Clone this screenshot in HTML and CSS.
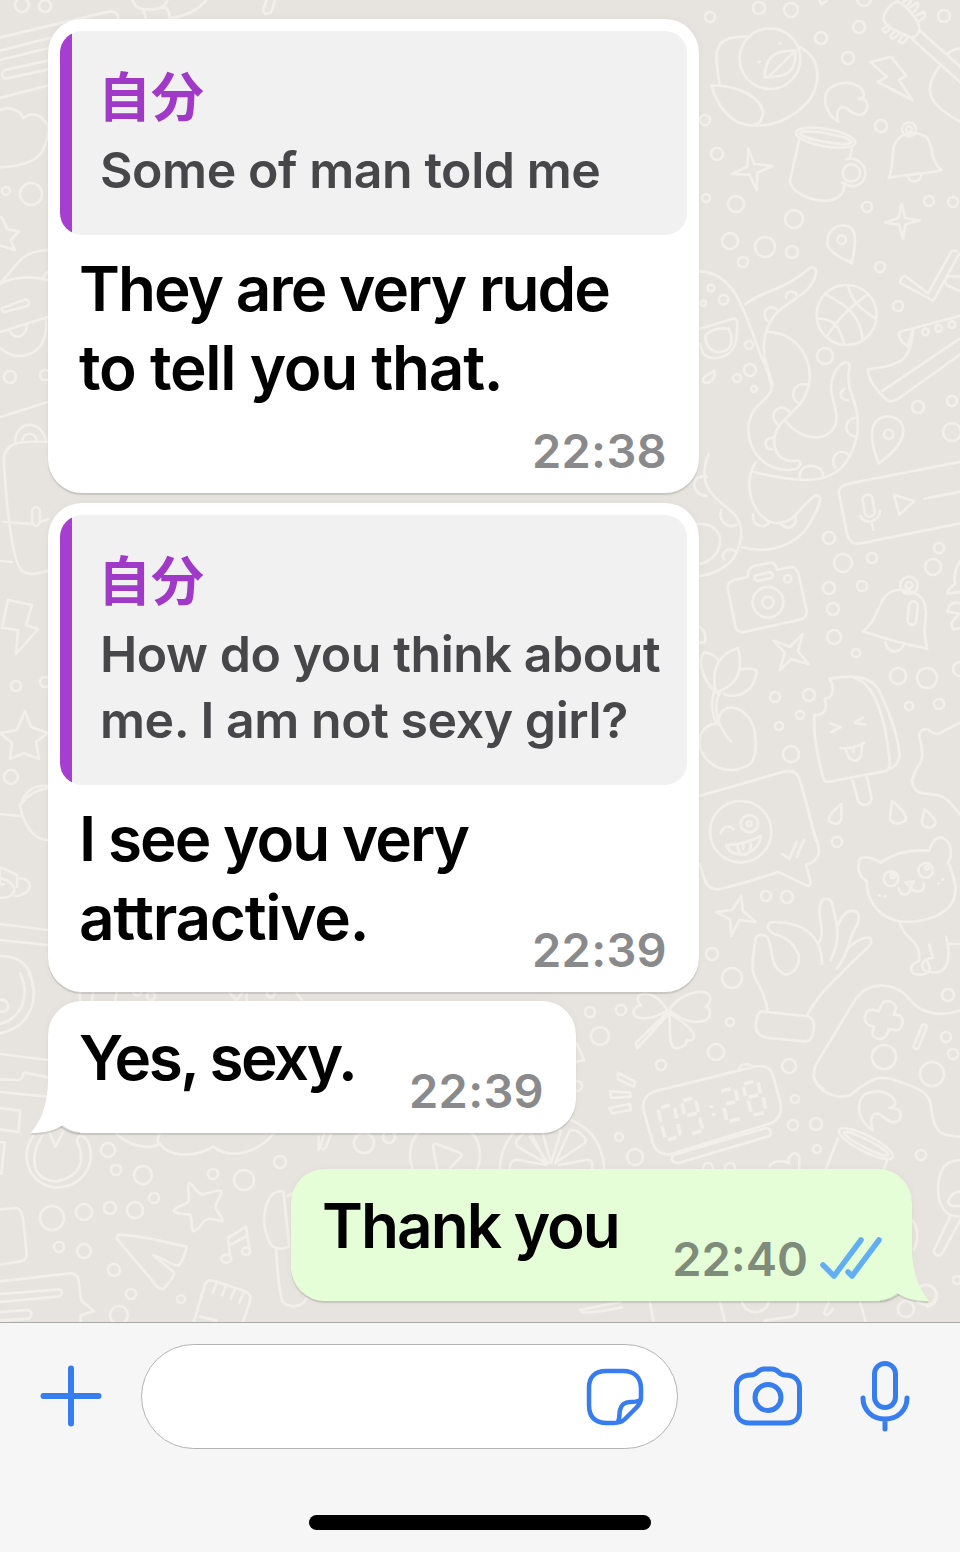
FILE: index.html
```html
<!DOCTYPE html>
<html lang="ja">
<head>
  <meta charset="UTF-8">
  <title>Chat</title>
  <link rel="stylesheet" href="styles.css">
</head>
<body>

  <div class="screen">
    <svg class="wallpaper" viewBox="0 0 960 1322" aria-hidden="true">
      <!-- small dots -->
      <g class="dots">
        <circle cx="710" cy="17" r="5"/><circle cx="759" cy="8" r="6"/><circle cx="791" cy="10" r="7"/><circle cx="821" cy="38" r="6"/><circle cx="859" cy="27" r="6"/><circle cx="864" cy="-1" r="7"/><circle cx="944" cy="16" r="6"/><circle cx="848" cy="58" r="6"/>
        <circle cx="705" cy="120" r="5"/><circle cx="717" cy="154" r="6"/><circle cx="706" cy="198" r="4"/><circle cx="736" cy="204" r="8"/><circle cx="881" cy="126" r="6"/><circle cx="867" cy="207" r="5"/><circle cx="929" cy="201" r="5"/><circle cx="953" cy="202" r="5"/>
        <circle cx="730" cy="241" r="8"/><circle cx="794" cy="219" r="9"/><circle cx="765" cy="247" r="10"/><circle cx="792" cy="252" r="6"/><circle cx="743" cy="262" r="5"/><circle cx="880" cy="267" r="5"/><circle cx="898" cy="306" r="5"/><circle cx="825" cy="356" r="8"/>
        <circle cx="749" cy="345" r="4"/><circle cx="750" cy="370" r="6"/><circle cx="737" cy="378" r="4"/><circle cx="754" cy="389" r="3"/><circle cx="918" cy="407" r="6"/><circle cx="952" cy="401" r="5"/><circle cx="952" cy="432" r="9"/><circle cx="829" cy="538" r="6"/>
        <circle cx="843" cy="563" r="9"/><circle cx="872" cy="558" r="5"/><circle cx="939" cy="548" r="5"/><circle cx="933" cy="567" r="8"/><circle cx="829" cy="588" r="6"/><circle cx="862" cy="586" r="5"/><circle cx="833" cy="609" r="6"/><circle cx="834" cy="637" r="7"/>
        <circle cx="856" cy="653" r="4"/><circle cx="898" cy="676" r="8"/><circle cx="927" cy="678" r="10"/><circle cx="909" cy="706" r="4"/><circle cx="939" cy="704" r="5"/><circle cx="960" cy="669" r="7"/><circle cx="775" cy="697" r="5"/><circle cx="809" cy="695" r="6"/>
        <circle cx="800" cy="715" r="4"/><circle cx="779" cy="726" r="4"/><circle cx="791" cy="754" r="8"/><circle cx="837" cy="842" r="5"/><circle cx="766" cy="896" r="5"/><circle cx="787" cy="897" r="6"/><circle cx="712" cy="954" r="6"/><circle cx="732" cy="978" r="10"/>
        <circle cx="730" cy="1022" r="4"/><circle cx="716" cy="1052" r="8"/><circle cx="789" cy="1066" r="7"/><circle cx="948" cy="995" r="6"/><circle cx="946" cy="1037" r="5"/><circle cx="953" cy="1054" r="5"/><circle cx="884" cy="1057" r="12"/><circle cx="932" cy="1074" r="12"/>
        <circle cx="590" cy="1012" r="5"/><circle cx="621" cy="1010" r="5"/><circle cx="600" cy="1036" r="9"/><circle cx="661" cy="1065" r="5"/><circle cx="619" cy="1137" r="4"/><circle cx="635" cy="1157" r="8"/><circle cx="577" cy="1086" r="5"/><circle cx="795" cy="1099" r="4"/>
        <circle cx="793" cy="1125" r="5"/><circle cx="816" cy="1124" r="6"/><circle cx="817" cy="1149" r="4"/><circle cx="921" cy="1155" r="5"/><circle cx="708" cy="1168" r="5"/><circle cx="730" cy="1168" r="5"/><circle cx="906" cy="1309" r="8"/><circle cx="926" cy="1295" r="10"/><circle cx="957" cy="1280" r="4"/>
        <circle cx="108" cy="1150" r="7"/><circle cx="116" cy="1170" r="5"/><circle cx="143" cy="1175" r="9"/><circle cx="154" cy="1198" r="5"/><circle cx="213" cy="1174" r="5"/><circle cx="244" cy="1180" r="10"/><circle cx="280" cy="1162" r="6"/><circle cx="52" cy="1218" r="12"/>
        <circle cx="84" cy="1212" r="8"/><circle cx="110" cy="1208" r="6"/><circle cx="135" cy="1210" r="8"/><circle cx="59" cy="1247" r="5"/><circle cx="84" cy="1251" r="7"/><circle cx="114" cy="1270" r="6"/><circle cx="131" cy="1294" r="5"/><circle cx="181" cy="1299" r="4"/><circle cx="119" cy="1315" r="9"/>
        <circle cx="22" cy="5" r="7"/><circle cx="45" cy="6" r="6"/><circle cx="6" cy="191" r="4"/><circle cx="31" cy="194" r="11"/><circle cx="10" cy="377" r="6"/><circle cx="45" cy="375" r="5"/><circle cx="16" cy="686" r="5"/><circle cx="45" cy="682" r="5"/><circle cx="11" cy="777" r="7"/>
        <circle cx="364" cy="1143" r="10"/><circle cx="389" cy="1137" r="6"/>
      </g>

      <!-- right side, top: orange, mug, bell, guitar -->
      <g class="doodle" transform="translate(690 0) scale(.33333)">
        <circle cx="240" cy="176" r="91"/>
        <path d="M178 110C110 108 82 122 80 165c-2 30 4 55 8 85M325 140c48 20 60 60 56 100-8 80-110 145-200 136C110 370 78 300 64 256c90 0 150 40 155 82-2 25-14 34-26 36"/>
        <path d="M316 152c-70-2-90 24-92 80 66 0 96-14 92-80L240 226M268 131h4M206 186h4"/>
        <path d="M445 366c-30-20-50-60-34-90 26-40 100-34 110 4 2 12-6 16-14 16 18-4 30 14 22 34-12 26-40 12-60-6-20-10-34 10-24 42z"/>
        <path d="M541 186l62-16 46 58-22 12 40 60-104-54 28-16z"/>
        <path d="M328 418L300 542c0 50 140 90 160 30l4-24M480 470l6-24M468 478c30-10 60 14 58 46-6 34-40 44-70 24"/>
        <circle cx="484" cy="519" r="26"/>
        <ellipse cx="407" cy="413" rx="90" ry="26" transform="rotate(10 407 413)"/>
        <ellipse cx="407" cy="413" rx="78" ry="13" transform="rotate(10 407 413)"/>
        <path d="M175 446l18 46 55 6-46 20-2 52-22-46-52-2 46-22zM635 612l10 42 44 8-42 10-8 44-12-42-42-6 40-14z"/>
        <path d="M596 534c24-50-4-100 40-126 20-14 54-10 74 4 26 36 4 60 44 98-50 14-100 10-158 24zM654 530c6 22 38 18 40-6"/>
        <circle cx="657" cy="388" r="21"/><circle cx="657" cy="388" r="9"/>
        <path d="M414 740c-10-50 30-70 58-62 30 8 26 50 14 112-30-14-64-34-72-50z"/><circle cx="455" cy="719" r="13"/>
        <path d="M622 4c-26 10-54 50-34 68 20 20 56 32 78 42 14-6 24-16 22-30-6-30-36-66-66-80zM666 116l150 136M690 92l130 116M748 200c-60 80-20 120 70 170M774 160q20-16 40-14"/>
        <path d="M640 6l20-16q10 10-8 26M660 22l22-14q8 12-12 28M680 46l22-10q10 16-16 28M596 74l-18 14q4 20 24-4M618 92l-18 16q6 18 26-6M640 104l-14 20q18 14 26-14"/>
        <path d="M388 0l6 12 14-8 4-14"/>
      </g>

      <!-- right side: octopus, ball, shoe, voice note -->
      <g class="doodle" transform="translate(690 260) scale(.33333)">
        <path d="M27 34c130 0 150 190 206 300 20 70 14 60-30 104-60 60-20 190 90 192 50 0 42-36 24-28-60 10-86-60-44-112l56-56c70-90 10-220-98-218"/>
        <path d="M166 132c60-44 116-40 190-106 30-16 30 26-4 62-30 30-70 44-100 80-30 40-40 100-20 154l16 54"/>
        <path d="M284 480c60 80 156 60 156-8-4-50-30-80-8-130 24-46 50-40 46-20-16 80 34 90 24 200-30 150-130 160-310 114M196 608c-46 80 6 172 54 180 70 10 80-60 130-82 30 0-14 76-40 112-50 50-120 60-184 44"/>
        <path d="M56 582c-50 120 60 150 84 190 20 30 20 70-10 124q-40 46-102 52M20 792c80-6 90 70 40 106q-14 12-32 14M50 650c-50-10-50 54 0 58M94 750c-12 30 20 60 46 44M136 872c-30-10-44 10-34 26M190 762c-6 36 30 44 46 28M272 792c20 20 50 10 44-22"/>
        <path d="M232 182c-24-30 10-54 32-30M288 112c0-22 24-20 32-8M350 374c-40-10-54 40-26 54M262 492c-34-30 10-70 36-36M250 534c-32-4-30 36-4 34M464 386c-22 16-10 34 10 34M494 474c-34 6-34 50 2 56M436 624c-20-30 10-64 40-40M330 656c-10-50 70-50 70-6"/>
        <circle cx="63" cy="84" r="10"/><circle cx="101" cy="119" r="14"/><circle cx="40" cy="130" r="8"/>
        <path d="M30 206l100-30c20 0 8 24 10 60-10 60-70 70-100 46l-10-30M46 226c20-20 50-22 70-20 14 30 10 60-10 66-30 14-60-6-60-46zM72 332c8 20-14 46-34 32 0-18 16-16 34-32z"/>
        <circle cx="470" cy="165" r="90"/>
        <path d="M404 102c60 30 106 60 114 134M474 76c10 50 40 70 80 98M532 104c-40 30-80 60-120 124M386 176c40 0 64 20 76 76"/>
        <path d="M800-26q-14-6-18 4L714 100l-68-52c-12 0-18 16-14 22l98 52L808-20M810 50l-34-2c-16 10-12 24 0 30l34 16M470 0l16 8V0"/>
        <path d="M816 166l-188 50c-8 20 20 40 26 44 4-20 10-40 16-54-6 90-30 110-136 122 0 30 20 60 60 94 14 6 20-2 34-8l190-136M578 392l234-158"/>
        <circle cx="706" cy="216" r="10"/><circle cx="746" cy="205" r="10"/><circle cx="786" cy="194" r="10"/>
        <path d="M566 610c-20-50-40-130 20-140 60-6 90 64-20 140z"/><circle cx="596" cy="523" r="14"/>
        <path d="M820 604l-340 66c-30 6-36 20-32 36l24 120c8 22 20 28 40 24l308-62M612 704l60 20-44 40zM704 716l110-22"/>
        <rect x="521" y="704" width="30" height="66" rx="15" transform="rotate(-10 536 737)"/>
        <path d="M510 768c16 30 60 16 60-16M544 784l6 26"/>
      </g>

      <!-- right side: camera, bell, cherry, ice cream -->
      <g class="doodle" transform="translate(690 540) scale(.33333)">
        <path d="M114 148c-4-16 6-24 18-28l42-10c-2-22 8-28 18-32l50-10c14 0 16 12 20 22l34-8c20-4 26 8 30 22l24 108c0 14-4 22-16 26l-170 38c-14 2-24-2-28-16z"/>
        <circle cx="234" cy="187" r="46"/><circle cx="234" cy="187" r="17"/><circle cx="293" cy="116" r="11"/>
        <rect x="193" y="101" width="56" height="18" rx="9" transform="rotate(-12 221 110)"/>
        <path d="M250 302l50 18 38-38-14 52 32 38-52-14-34 32 14-52z"/>
        <path d="M518 274c60-40 40-130 120-124 24 6 70 6 70 70-2 40-10 60 4 106-70-14-130-30-194-52zM586 306c4 34 44 36 54 10"/>
        <circle cx="657" cy="136" r="26"/><circle cx="657" cy="136" r="10"/>
        <rect x="655" y="184" width="26" height="70" rx="13" transform="rotate(6 668 219)"/>
        <path d="M820 50c-26 30-30 70-24 80-10 10-28 22-24 30l40-4M812 190c-30-8-36 10-40 24l36 8c-20 20-30 30-18 46l24-4"/>
        <path d="M28 260c16 12 22 30 16 48H28"/>
        <path d="M78 458c-50-50-52-100-36-120 20 0 36 10 44 24M78 458c-20-80 20-120 66-134 16 70 0 110-66 134M152 388c30-4 50-2 48 10-10 60-60 80-98 64M72 458c-10 30-6 60 6 90M92 452c-20 40-14 60-6 94 10 20 20 46 38 58M86 552c-4-80 104-60 110 40 4 40-4 70-14 78-50 40-140 20-154-60 0-40 26-60 56-58"/>
        <path d="M418 416c60-10 130-16 154 46 34 70 60 160 56 190-6 24-20 34-46 42l-170 32c-10-2-12-8-14-16-20-80-30-140-24-186 30 4 40-20 30-48 28 0 30-40 14-60zM490 412c80 20 100 170 108 240 4 26 0 34-8 40M488 722l16 60c14 22 44 12 40-12l-14-60M420 550l32 12-28 14M520 532l-26 16 32 6M452 624q40 4 70-16M468 626c4 50 56 50 46-12M490 622v14"/>
        <path d="M816 544l-60 32c-20 14-30-2-44-8-20-2-28 10-22 30 20 90-10 60-24 124 4 46 40 36 80 44 40 14 40 36 74 66"/>
        <path d="M28 768l250-72c30-8 44 2 50 20 20 60 30 120 50 186"/>
      </g>

      <!-- right side: emoji note, cat, ok hand, gamepad -->
      <g class="doodle" transform="translate(690 790) scale(.33333)">
        <path d="M454 42c-30 24-42 40-36 52 20 16 40 0 36-10zM606 34c30 20 46 44 40 58-20 16-48 6-46-12zM704 58c24 20 36 34 32 44-16 20-44 8-40-10z"/>
        <path d="M374 132c20 50 20 80-26 92 6 30 22 60 8 64-30-10-60-30-92-42-60 20-120 40-180 52-40 0-44-40-54-76M338 0l36 132"/>
        <circle cx="152" cy="125" r="92"/><circle cx="178" cy="101" r="26"/><circle cx="178" cy="101" r="7"/>
        <path d="M92 130c6-22 30-26 38-12M108 166c30-2 70-8 104-28 0 50-80 80-104 28zM142 166c4 40 44 40 40-8M160 164v12M276 192l22 14 22-50M320 200l22-50"/>
        <path d="M154 318l4 44 40 34-50-6-24 48-4-50-42-22 48-6z"/>
        <path d="M572 218c-30-20-60-20-64-8-8 30 4 56 22 62 0 62 40 122 120 124 90-4 160-40 144-120-6-26-14-46-20-60 16-20 8-60-12-70-20-14-40 16-44 36-60-4-104 6-146 36z"/>
        <circle cx="603" cy="266" r="22"/><circle cx="707" cy="241" r="22"/><circle cx="608" cy="258" r="6"/><circle cx="712" cy="233" r="6"/>
        <path d="M646 278l26-4-10 16zM662 290c0 30-34 30-36 4M662 290c4 20 50 20 38-10M568 317h2M585 319h2M745 281h2M757 269h2"/>
        <path d="M630 400c20 60 60 40 58 112-30 10-36 40 0 42 30 0 40-14 22-42M718 464l10 40c-40 0-40 40-10 42 50 10 70-30 50-106M780 462h36"/>
        <path d="M232 660c-10-80-50-80-44-150l8-60c0-20 34-20 40 0 16 40 0 80 50 104 30-4 44-30 40-60-10-20-24-50-70-60-30-14-30-40 0-38 80 0 140 40 140 126M384 460c30-30-14-100 14-130 14-8 24-2 28 10 14 60 30 100-4 170M440 412c14-30 26-50 50-50 20 4 20 30 10 44-30 50-20 80-60 130M470 478c20-20 50-40 70-34 16 20-14 30-80 100-40 40-76 70-108 130"/>
        <path d="M212 664l130 14c20 0 30 10 30 30-2 30-10 46-26 46l-110-10c-30-4-40-20-38-40 2-20 4-34 14-40z"/>
        <path d="M400 896c-30-20-36-40-20-76l110-182c40-70 120-60 160-20 40 60 110 60 160 44"/>
        <path d="M572 652c4-30 44-20 46 2l-6 20c24-2 32 18 20 40-8 10-16 6-36 4-6 34-34 34-46 20-6-8 0-16 2-28-30-4-32-26-22-44 8-8 20-8 36-2z"/>
        <rect x="683" y="702" width="15" height="76" rx="4" transform="rotate(22 690 740)"/>
      </g>

      <!-- lower right: clover, clock, mug, gamepad bottom -->
      <g class="doodle" transform="translate(560 980) scale(.33333)">
        <path d="M322 92c-20-40-60-60-84-46-10 8-2 24 4 30-24 6-28 26-10 36 30 8 64-4 90-20zM328 90c20-34 60-56 100-54 26 2 30 26 10 44 16 6 16 30 0 40-30 14-80 0-110-30zM328 100c40 24 76 50 74 72-2 10-14 10-22 8 0 14-14 26-36 24-20-10-12-60-16-104zM322 98L228 188l4 16 90-98"/>
        <path d="M174 278l52 28-4 14-48-22zM150 334l60 4 2 12-58 4zM148 384l62-12 2 18-56 10z"/>
        <path d="M284 334l300-74c40-6 50 10 56 30l22 80c4 30-6 50-30 60l-300 92c-30 4-46-10-54-34l-28-100c-4-30 10-44 34-54zM338 526l280-82c16 0 18 18 10 24l-270 80c-20 4-26-10-20-22zM538 268c0-18 34-20 36-8"/>
        <path class="digits" d="M304 383l26-8M344 384l6 32M354 432l7 34M324 479l26-7M295 390l7 36M306 438l9 34M370 362l26-7M408 362l7 34M419 412l8 34M396 460l28-7M382 407l28-7M366 370l7 32M454 376v8M461 400v8M484 333l28-7M526 330l7 32M499 372l26-7M492 384l8 36M508 424l32-8M552 312l28-8M594 307l7 33M565 352l30-7M610 352l7 34M582 405l30-7M550 322l7 26M565 362l8 34"/>
        <path d="M760 290c10 40 60 70 110 56 50-40 80-70 150-40 60 20 90 30 94 80 10 80 30 80 90 84"/>
        <path d="M938 450c-40-20-54-80-26-106 40-20 90-6 94 28-6 10-10 12-18 12 30 0 40 10 32 34-20 20-40 0-60-14-20-10-34 10-22 46zM834 476l-36 90M982 538l-10 30"/>
        <ellipse cx="918" cy="491" rx="90" ry="24" transform="rotate(27 918 491)"/><ellipse cx="918" cy="491" rx="74" ry="12" transform="rotate(27 918 491)"/>
        <path d="M628 560c10-20 40-20 60-10-10-20 20-44 30-20v36"/>
        <path d="M1200 540c-60 0-70 60-64 110 6 40 30 60 64 60M1200 634c-30 4-50 40-20 44h20M1170 710l-48 100c0 20 20 20 26 8l52-96M1056 720c20 20 20 60 6 90M1080 920c20-14 50 0 50 26 0 20-10 30-26 34"/>
        <path d="M60 990l120-24M66 996c20 6 70-4 120-14M270 966l10 56M480 966l14 56M546 966c10 40 70 40 80 0M714 966c0 30-4 40-20 44l-80 12M806 966l-14 34c10 10 20 0 26-14M900 966l16 56M50 190l22 50-24 6"/>
      </g>

      <!-- lower left: cloud, compass, star, plane, notes -->
      <g class="doodle" transform="translate(0 980) scale(.33333)">
        <path d="M0 160c100-20 120-120 86-180M0 132c70-20 90-90 60-152M0 60c20-6 30 20 20 30-10 8-14 4-20 4"/>
        <path d="M0 222l146 18M0 298l54 2c20 0 10-20 20-22l72 14M0 336l144 14M0 384l60 8-4 64-56-8M0 486l14 2-10 94"/>
        <path d="M100 468c-40 50-20 140 60 154 80 4 130-60 106-134-10-20-30-30-36-6 30 60 10 110-60 122-80-4-80-80-44-136M150 460l16 40 24-46"/>
        <path d="M350 462c40 40 100 46 130 30 20 30 90 50 160 8 50 40 130 20 180-38M476 492c-4-10-4-20 2-30"/>
        <path d="M566 610c14-4 10 20 40 34 40-10 60-20 58-4-20 40-20 40-14 50 20 30 26 40 0 30-50-14-40 24-70 34-10-10 0-30-10-50-60-4-60-14-20-30 30-10 10-30 16-64z"/>
        <path d="M354 764c60 0 130 20 206 36-4 20-14 46-24 56-20 4-40-20-76-30l56 46c14 10 0 24-24 54-20 6-30-20-40-30L350 776z"/>
        <path d="M690 826l-6-52 54-34 10 66M688 796l52-28"/><ellipse cx="679" cy="836" rx="15" ry="12"/><ellipse cx="738" cy="814" rx="12" ry="11"/>
        <path d="M850 634c-50-10-70 80-50 130 10 40 30 50 66 36M850 634l18 166M862 648l18-8M828 806c4 60 6 120 20 160 20 20 60 16 70-10"/>
        <path d="M580 1030l36-120c10-14 20-8 30-6l90 30c20 10 16 20 12 36l-20 60M652 906l-14 32M680 914l-14 32M706 924l-14 32M732 936l-14 32M600 1010l50 12"/>
        <path d="M0 688l50-4c20 6 20 30 30 140-2 20-14 20-30 22l-50 8M0 904l210-24c40 0 20 50 36 84l36 30-40 12v24M0 942l180-14c10 6 6 18-4 22L0 966M0 996l84-6c14 4 12 20 2 26L0 1022"/>
        <path d="M240 36v26M280 36l-4 26M350 36l-4 26M400 40c10 10 20 6 24-2M690 40l20 20 16-20M740 42v20M800 40c4 16 20 16 24 0M890 40l16 20M956 470v40"/>
        <circle cx="453" cy="48" r="12"/>
      </g>

      <!-- upper left: books, cloud, star -->
      <g class="doodle" transform="scale(.33333)">
        <path d="M0 112l330-78c20 0 26 10 24 24M0 152l150-38M0 180l146-36M144 182L14 210c-14 10-6 26 4 26l128-28M0 294l146-38"/>
        <path d="M0 330c30-12 60 0 70 24 40-30 70 10 76 30-10 60-10 110-146 118M0 650c16 6 12 30 24 38l34 6-26 26 12 30-44-14"/>
        <path d="M398 0c10 30 30 28 60 28 30 0 40-16 44-28M430 30l8 26M480 24c30-6 30 20 26 34M510 54c50-4 90-30 110-54M800 0l-10 30c0 16 22 14 26 0l10-30"/>
      </g>

      <!-- left strip -->
      <g class="doodle">
        <path d="M0 283c16-14 18-32 48-33M0 284c14-8 34-8 48-4M44 278q0-4 4-6M2 308l24-9q6 4 1 7l-22 6q-4-1-3-4M0 332l48-15M46 320c2 28-14 36-28 36q-10-1-18-8M9 329c4 12 18 10 18-6M0 417l48-15"/>
        <path d="M4 462c-2-20 18-22 44-20M4 462c2 40 8 100 18 109 8 6 18 1 26 0M4 522l28 2M40 522l8-3M15 443c0-24 28-24 31-1M22 442c2-12 14-10 15 0M0 561l12 1"/>
        <path d="M32 510v12q4 8 8 0v-12q-4-6-8 0z"/>
        <path d="M8 600l24 5-6 20 12 4-22 25 2-24-16-2zM25 711l6 16 17 6-12 9 3 17-15-6-14 6 2-16-12-10 17-3z"/>
        <path d="M0 814l20 2M20 806c4-14 14-22 28-20M20 806c4 20 14 34 28 34M20 806c6-10 16-16 28-18M2 868l15 7v12M0 868q-2 20 4 16M17 878c20 0 14 18-2 18M0 878c18 4 20 20 0 20M0 924l48 6M0 940l48 5M0 956c20 0 32 10 33 32"/>
      </g>

      <!-- strip between the last bubbles -->
      <g class="doodle">
        <circle cx="445" cy="1155" r="35"/>
        <path d="M450 1168l11-11q2-3-1-4l-23-9q-4-1-4 3l4 21M324 1134l-4 13q3 4 6 0l5-13"/>
        <path d="M500 1168c2-66 100-70 104 0M548 1163l-18-26M543 1134l8 29 10-32q-6-6-12-2M555 1163l30-20q2-3-2-7c-8-8-12-6-14-4zM546 1163l-28-16q-4-4 0-8c8-10 12-8 14-4zM510 1168q0-9 9-8l27 5M592 1168q2-9-6-8l-27 5"/>
      </g>
    </svg>

    <main class="chat">
      <div class="bubble received quoted">
        <div class="quote">
          <div class="quote-name">自分</div>
          <div class="quote-text">Some of man told me</div>
        </div>
        <div class="message"><span class="tight">They are very rude</span><br>to tell you that.</div>
        <div class="time time-below">22:38</div>
      </div>

      <div class="bubble received quoted second">
        <div class="quote">
          <div class="quote-name">自分</div>
          <div class="quote-text">How do you think about<br>me. I am not sexy girl?</div>
        </div>
        <div class="message-row">
          <div class="message"><span class="tight">I see you very</span><br>attractive.</div>
          <div class="time">22:39</div>
        </div>
      </div>

      <div class="bubble received short">
        <svg class="tail tail-left" viewBox="0 0 50 60"><path d="M18 0C18 30 12 44 1 58C14 58 24 56 33 50C38 54 42 56 50 57V0Z"/></svg>
        <div class="message tighter">Yes, sexy.</div>
        <div class="time">22:39</div>
      </div>

      <div class="bubble sent short">
        <svg class="tail tail-right" viewBox="0 0 50 60"><path d="M32 0C32 30 38 44 49 58C36 58 26 56 17 50C12 54 8 56 0 57V0Z"/></svg>
        <div class="message tight">Thank you</div>
        <div class="time">22:40</div>
        <svg class="ticks" viewBox="0 0 62 42"><path d="M3 28l11 11L41 3M28 35l4 4L59 3"/></svg>
      </div>
    </main>

    <footer class="toolbar">
      <div class="controls">
        <svg class="icon plus" viewBox="0 0 62 62"><path d="M31 3.500v55M3.500 31h55"/></svg>
        <div class="input">
          <svg class="icon sticker" viewBox="0 0 58 58"><path d="M20 3h17c12 0 18 7 18 18v9c0 4-2 7-5 10L39 51c-3 3-7 4-11 4h-7C9 55 3 49 3 37V20C3 9 9 3 20 3zM32 54c2-4 1-8 2-12 1-5 5-8 10-8 4 0 7 0 10-2"/></svg>
        </div>
        <svg class="icon camera" viewBox="0 0 68 60"><path d="M17 9c7 0 6-6 13-6h8c7 0 6 6 13 6c9 0 14.500 5 14.500 13v22c0 8-5 13-13 13h-37c-8 0-13-5-13-13V22C2.500 14 8 9 17 9z"/><circle cx="34" cy="31.500" r="13"/></svg>
        <svg class="icon mic" viewBox="0 0 50 72"><rect x="14.500" y="2.500" width="21" height="44" rx="10.500"/><path d="M3 37c0 12 9 21 22 21s22-9 22-21M25 58v10"/></svg>
      </div>
      <div class="home-bar"></div>
    </footer>
  </div>

</body>
</html>
```
FILE: styles.css
```css
body {
  margin: 0;
  font-family: Inter, "Noto Sans CJK JP", sans-serif;
}
.screen {
  position: relative;
  display: flex;
  flex-direction: column;
  width: 960px;
  height: 1552px;
  overflow: hidden;
  background-color: #e7e4df;
}
.wallpaper {
  position: absolute;
  top: 0;
  left: 0;
  width: 960px;
  height: 1322px;
}
.dots {
  fill: none;
  stroke: #f2efea;
  stroke-width: 2.6;
}
.doodle {
  fill: none;
  stroke: #f2efea;
  stroke-width: 8;
  stroke-linecap: round;
  stroke-linejoin: round;
}
.doodle:not([transform]) {
  stroke-width: 2.6;
}
.digits {
  stroke-width: 11;
  stroke-linecap: butt;
}
.chat {
  position: relative;
  display: flex;
  flex-direction: column;
  align-items: flex-start;
  height: 1303px;
  padding: 19px 48px 0;
}
.bubble {
  position: relative;
  box-sizing: border-box;
  border-radius: 34px;
  background-color: #fff;
  box-shadow: 0 2px 1px rgba(0, 0, 0, 0.12), 0 0 10px rgba(0, 0, 0, 0.03);
}
.quoted {
  width: 651px;
  height: 474px;
  padding: 12px;
}
.second {
  height: 489px;
  margin-top: 10px;
}
.quote {
  box-sizing: border-box;
  padding: 31px 0 32px 40px;
  border-radius: 22px;
  background: linear-gradient(to right, #a83dd1 12px, #f1f1f1 12px);
}
.quote-name {
  height: 75px;
  margin-left: -2px;
  color: #a038c8;
  font-family: "Noto Sans CJK JP", sans-serif;
  font-size: 53px;
  font-weight: 700;
  line-height: 64px;
}
.quote-text {
  color: #47474a;
  font-size: 50px;
  font-weight: 600;
  letter-spacing: -0.43px;
  line-height: 66px;
  white-space: nowrap;
}
.message {
  padding-left: 19px;
  color: #000;
  font-size: 62px;
  font-weight: 600;
  letter-spacing: -1.25px;
  line-height: 79px;
  white-space: nowrap;
}
.tight {
  letter-spacing: -1.95px;
}
.tighter {
  letter-spacing: -2.5px;
}
.quoted > .message {
  margin-top: 14px;
}
.time {
  color: #8a8a8d;
  font-size: 47px;
  font-weight: 600;
  letter-spacing: 0.3px;
  line-height: 56px;
}
.time-below {
  margin: 16px 20px 0 0;
  text-align: right;
}
.message-row {
  display: flex;
  justify-content: space-between;
  align-items: flex-end;
  padding: 14px 20px 0 0;
}
.message-row .time {
  margin-bottom: -21px;
}
.short {
  display: flex;
  align-items: flex-end;
  justify-content: space-between;
  width: 528px;
  height: 132px;
  margin-top: 9px;
  padding: 0 32px 14px 12px;
}
.short .message {
  margin-bottom: 22px;
}
.sent {
  align-self: flex-end;
  width: 621px;
  margin-top: 36px;
  padding-right: 30px;
  background-color: #e6fed8;
}
.sent .time {
  margin: 0 12px 0 auto;
  color: #7f8c7b;
  letter-spacing: 0;
}
.tail {
  position: absolute;
  bottom: -2px;
  width: 50px;
  height: 60px;
  fill: #fff;
  filter: drop-shadow(0 2px 0 rgba(0, 0, 0, 0.1));
}
.tail-left {
  left: -18px;
}
.tail-right {
  right: -18px;
  fill: #e6fed8;
}
.ticks {
  width: 62px;
  height: 42px;
  margin-bottom: 8px;
  fill: none;
  stroke: #62aef5;
  stroke-width: 5.5;
  stroke-linecap: round;
  stroke-linejoin: round;
}
.toolbar {
  position: relative;
  box-sizing: border-box;
  height: 230px;
  padding-top: 21px;
  border-top: 1px solid #a9aaa7;
  background-color: #f6f6f6;
}
.controls {
  display: flex;
  align-items: center;
  height: 105px;
  padding-left: 40px;
}
.icon {
  flex: none;
  fill: none;
  stroke: #377df0;
  stroke-width: 5;
  stroke-linecap: round;
  stroke-linejoin: round;
}
.plus {
  width: 62px;
  height: 62px;
  margin-bottom: 2px;
  stroke-width: 6;
}
.input {
  display: flex;
  align-items: center;
  justify-content: flex-end;
  box-sizing: border-box;
  width: 537px;
  height: 105px;
  margin-left: 39px;
  padding-right: 33px;
  border: 1px solid #b4b4b4;
  border-radius: 53px;
  background-color: #fff;
}
.sticker {
  width: 58px;
  height: 58px;
  stroke-width: 4.5;
}
.camera {
  width: 68px;
  height: 60px;
  margin: 0 0 2px 56px;
}
.mic {
  width: 50px;
  height: 72px;
  margin-left: 58px;
}
.home-bar {
  width: 342px;
  height: 15px;
  margin: 66px auto 0;
  border-radius: 8px;
  background-color: #000;
}
```
